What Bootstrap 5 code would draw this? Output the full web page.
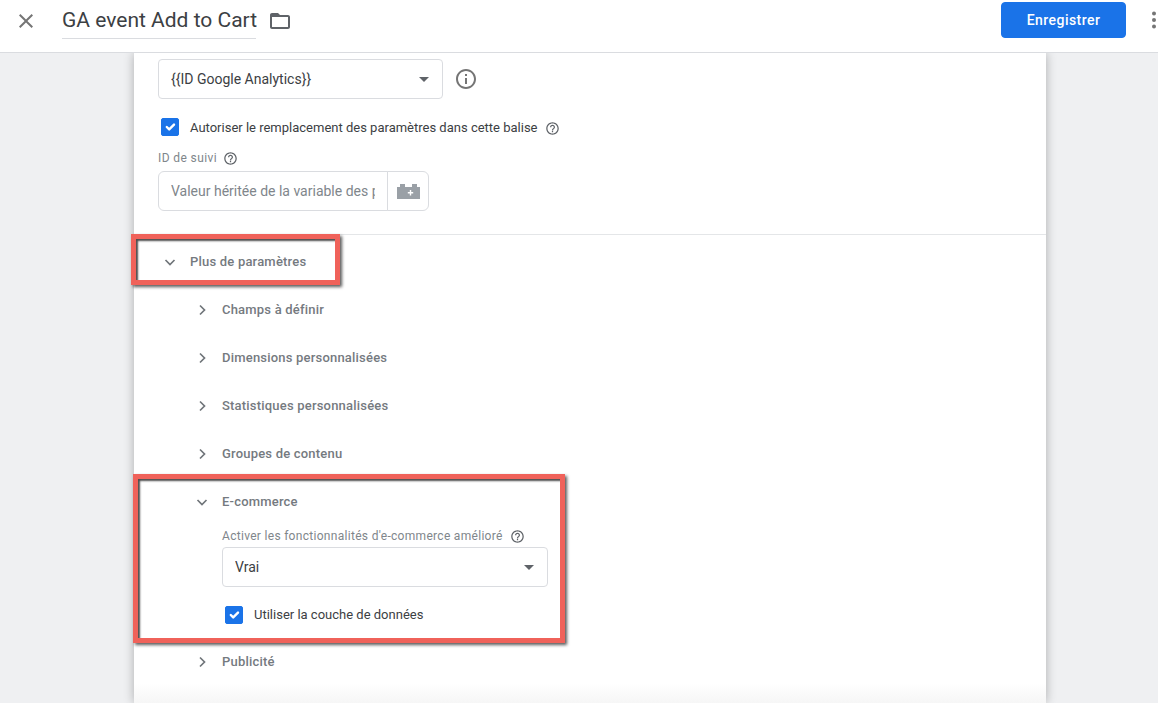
<!DOCTYPE html>
<html lang="fr">
<head>
  <meta charset="UTF-8" />
  <meta name="viewport" content="width=device-width, initial-scale=1.0"/>
  <title>GA event Add to Cart</title>
  <link href="https://cdn.jsdelivr.net/npm/bootstrap@5.3.0/dist/css/bootstrap.min.css" rel="stylesheet">
  <style>
    html, body { height: 703px; overflow: hidden; }
    body {
      font-family: Roboto, "Liberation Sans", sans-serif;
      background: #eff0f2;
      color: #202124;
      position: relative;
    }

    .top-bar {
      height: 53px;
      background: #fff;
      border-bottom: 1px solid #dadce0;
      padding-left: 14px;
      padding-bottom: 10px;
    }
    .tag-title {
      font-size: 21px;
      line-height: 35px;
      width: 194px;
      margin-left: 24px;
      white-space: nowrap;
      color: #3c4043;
      border-bottom: 1px solid #dadce0;
    }
    .folder-ico { margin-left: 12px; fill: #5f6368; }
    .btn.save-btn {
      width: 125px;
      height: 36px;
      margin-top: -2px;
      padding: 1px 0 0;
      font-size: 14px;
      font-weight: 500;
      letter-spacing: .45px;
      background: #1a73e8;
      border-color: #1a73e8;
      border-radius: 4px;
    }
    .more-ico { margin-left: 14px; fill: #757575; }

    .tag-panel {
      width: 912px;
      height: 650px;
      margin-left: 134px;
      padding-top: 6px;
      background: #fff;
      overflow: hidden;
      box-shadow: 0 0 10px rgba(0, 0, 0, .28);
    }
    .panel-wrap { height: 650px; overflow: hidden; }

    .form-select.gtm-select {
      height: 40px;
      padding: 0 40px 0 12px;
      font-size: 14px;
      color: #3c4043;
      border-color: #dadce0;
      border-radius: 4px;
      background-image: url("data:image/svg+xml,%3Csvg xmlns='http://www.w3.org/2000/svg' width='10' height='5'%3E%3Cpath d='M0 0h10L5 5z' fill='%235f6368'/%3E%3C/svg%3E");
      background-size: 10px 5px;
      background-position: right 13px center;
    }
    .select-one { width: 285px; margin-left: 24px; }
    .select-two { width: 326px; }
    .info-ico { margin-left: 11px; fill: #757575; }

    .form-check-input.gtm-check {
      width: 18px;
      height: 18px;
      margin: 0;
      flex: none;
      border-radius: 2px;
      background-color: #1a73e8;
      border-color: #1a73e8;
    }
    .check-text { font-size: 13px; color: #3c4043; }
    .check-one { margin: 19px 0 0 27px; height: 20px; gap: 10px; }
    .check-one .check-text { margin-left: 1px; }
    .check-one .ico-help { margin-left: -3px; }
    .check-one .gtm-check { margin-top: -3px; }
    .check-two { margin: 19px 0 0 3px; gap: 11px; height: 18px; }

    .field-label { font-size: 12px; line-height: 16px; color: #80868b; letter-spacing: .4px; }
    .ico-help { width: 15px; height: 15px; fill: #5f6368; flex: none; }
    .id-label { margin: 11px 0 4px 24px; gap: 6px; height: 18px; }

    .id-group { width: 271px; height: 40px; margin-left: 24px; }
    .id-group .form-control {
      font-size: 14px;
      padding: 0 12px;
      color: #80868b;
      border-color: #dadce0;
    }
    .id-group .form-control::placeholder { color: #80868b; opacity: 1; }
    .id-group .input-group-text {
      width: 42px;
      padding: 0;
      justify-content: center;
      background: #fff;
      border-color: #dadce0;
    }

    .panel-rule { height: 1px; margin: 23px 0 3px; background: #e4e6e8; }

    .sect-row { height: 48px; font-size: 13px; font-weight: 500; color: #757a7f; letter-spacing: .2px; }
    .sect-top { padding-left: 30px; }
    .sect-sub { padding-left: 62px; }
    .chev { width: 12px; height: 12px; margin-right: 14px; fill: none; stroke: #70757a; stroke-width: 1.7; flex: none; }
    .chev-side { margin-left: 0; }

    .ecom-body { padding-left: 88px; margin-top: 2px; }
    .ecom-label { gap: 7px; height: 16px; margin-bottom: 3px; letter-spacing: .3px; }
    .ecom-body + .sect-row { margin-top: 14px; }

    .red-box {
      position: absolute;
      border: 5px solid #f0625a;
      box-shadow: 2px 2px 3px rgba(0, 0, 0, .65), inset 2px 2px 2px rgba(0, 0, 0, .7);
      pointer-events: none;
    }
    .box-one { left: 131px; top: 234px; width: 209px; height: 51px; }
    .box-two { left: 133px; top: 474px; width: 432px; height: 169px; }

    .bottom-fade {
      position: absolute;
      left: 134px;
      bottom: 0;
      width: 912px;
      height: 20px;
      background: linear-gradient(rgba(245, 245, 245, 0), #f6f6f6);
    }
  </style>
</head>
<body>
  <svg width="0" height="0" class="position-absolute">
    <symbol id="i-help" viewBox="0 0 24 24"><path d="M11 18h2v-2h-2v2zm1-16C6.48 2 2 6.48 2 12s4.48 10 10 10 10-4.48 10-10S17.52 2 12 2zm0 18c-4.41 0-8-3.59-8-8s3.59-8 8-8 8 3.59 8 8-3.59 8-8 8zm0-14c-2.21 0-4 1.79-4 4h2c0-1.1.9-2 2-2s2 .9 2 2c0 2-3 1.75-3 5h2c0-2.25 3-2.5 3-5 0-2.21-1.79-4-4-4z"/></symbol>
    <symbol id="i-right" viewBox="0 0 12 12"><path d="M4 1.5 8.5 6 4 10.5"/></symbol>
    <symbol id="i-down" viewBox="0 0 12 12"><path d="M1.5 4 6 8.5 10.5 4"/></symbol>
  </svg>

  <header class="top-bar d-flex align-items-center">
    <svg width="24" height="24" viewBox="0 0 24 24" fill="#757575"><path d="M19 6.41L17.59 5 12 10.59 6.41 5 5 6.41 10.59 12 5 17.59 6.41 19 12 13.41 17.59 19 19 17.59 13.41 12z"/></svg>
    <div class="tag-title">GA event Add to Cart</div>
    <svg class="folder-ico" width="24" height="24" viewBox="0 0 24 24"><path d="M20 6h-8l-2-2H4c-1.1 0-1.99.9-1.99 2L2 18c0 1.1.9 2 2 2h16c1.1 0 2-.9 2-2V8c0-1.1-.9-2-2-2zm0 12H4V8h16v10z"/></svg>
    <button type="button" class="btn btn-primary save-btn ms-auto">Enregistrer</button>
    <svg class="more-ico" width="18" height="24" viewBox="0 0 18 24"><circle cx="14" cy="4.5" r="2"/><circle cx="14" cy="11" r="2"/><circle cx="14" cy="17.5" r="2"/></svg>
  </header>

  <main class="panel-wrap">
    <div class="tag-panel">
      <div class="d-flex align-items-center">
        <select class="form-select gtm-select select-one"><option>{{ID Google Analytics}}</option></select>
        <svg class="info-ico" width="24" height="24" viewBox="0 0 24 24"><path d="M11 7h2v2h-2zm0 4h2v6h-2zm1-9C6.48 2 2 6.48 2 12s4.48 10 10 10 10-4.48 10-10S17.52 2 12 2zm0 18c-4.41 0-8-3.59-8-8s3.59-8 8-8 8 3.59 8 8-3.59 8-8 8z"/></svg>
      </div>

      <div class="d-flex align-items-center check-one">
        <input class="form-check-input gtm-check" type="checkbox" checked>
        <span class="check-text">Autoriser le remplacement des paramètres dans cette balise</span>
        <svg class="ico-help"><use href="#i-help"/></svg>
      </div>

      <div class="field-label d-flex align-items-center id-label">ID de suivi
        <svg class="ico-help"><use href="#i-help"/></svg>
      </div>

      <div class="input-group id-group">
        <input type="text" class="form-control" placeholder="Valeur héritée de la variable des paramètres">
        <span class="input-group-text">
          <svg width="23" height="15" viewBox="0 0 23 15"><path d="M0 3h3V0h5v3h7V0h5v3h3v12H0z" fill="#9aa0a6"/><path d="M10.8 8h2V6h1.4v2h2v1.4h-2v2h-1.4v-2h-2z" fill="#fff"/></svg>
        </span>
      </div>

      <div class="panel-rule"></div>

      <div class="sect-row sect-top d-flex align-items-center"><svg class="chev"><use href="#i-down"/></svg>Plus de paramètres</div>
      <div class="sect-row sect-sub d-flex align-items-center"><svg class="chev chev-side"><use href="#i-right"/></svg>Champs à définir</div>
      <div class="sect-row sect-sub d-flex align-items-center"><svg class="chev chev-side"><use href="#i-right"/></svg>Dimensions personnalisées</div>
      <div class="sect-row sect-sub d-flex align-items-center"><svg class="chev chev-side"><use href="#i-right"/></svg>Statistiques personnalisées</div>
      <div class="sect-row sect-sub d-flex align-items-center"><svg class="chev chev-side"><use href="#i-right"/></svg>Groupes de contenu</div>
      <div class="sect-row sect-sub d-flex align-items-center"><svg class="chev"><use href="#i-down"/></svg>E-commerce</div>

      <div class="ecom-body">
        <div class="field-label d-flex align-items-center ecom-label">Activer les fonctionnalités d'e-commerce amélioré
          <svg class="ico-help"><use href="#i-help"/></svg>
        </div>
        <select class="form-select gtm-select select-two"><option>Vrai</option></select>
        <div class="d-flex align-items-center check-two">
          <input class="form-check-input gtm-check" type="checkbox" checked>
          <span class="check-text">Utiliser la couche de données</span>
        </div>
      </div>

      <div class="sect-row sect-sub d-flex align-items-center"><svg class="chev chev-side"><use href="#i-right"/></svg>Publicité</div>
    </div>
  </main>

  <div class="bottom-fade"></div>
  <div class="red-box box-one"></div>
  <div class="red-box box-two"></div>

  <script src="https://cdn.jsdelivr.net/npm/bootstrap@5.3.0/dist/js/bootstrap.bundle.min.js"></script>
</body>
</html>
